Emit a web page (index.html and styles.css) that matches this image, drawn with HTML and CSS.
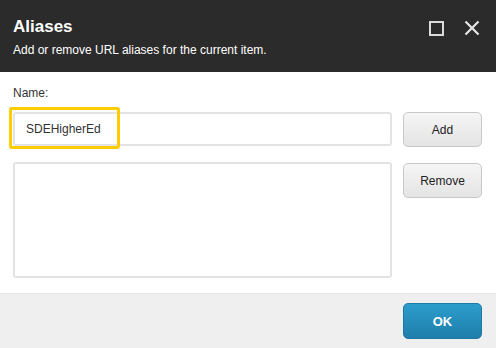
FILE: index.html
```html
<!DOCTYPE html>
<html>
<head>
<meta charset="utf-8">
<link rel="stylesheet" href="styles.css">
</head>
<body>
<div class="dialog">
  <header class="head">
    <div class="head-text">
      <div class="title">Aliases</div>
      <div class="subtitle">Add or remove URL aliases for the current item.</div>
    </div>
    <div class="head-icons">
      <span class="icon-max"></span>
      <svg class="icon-close" width="16" height="16" viewBox="0 0 16 16"><path d="M1.5 1.5 L14.5 14.5 M14.5 1.5 L1.5 14.5" stroke="#e6e6e6" stroke-width="2.2" fill="none"/></svg>
    </div>
  </header>
  <main class="content">
    <div class="label">Name:</div>
    <div class="row">
      <div class="field">
        <input class="input" type="text" value="SDEHigherEd">
        <span class="highlight"></span>
      </div>
      <button class="btn">Add</button>
    </div>
    <div class="row row-list">
      <div class="list"></div>
      <button class="btn">Remove</button>
    </div>
  </main>
  <footer class="foot">
    <button class="btn btn-primary">OK</button>
  </footer>
</div>
</body>
</html>
```
FILE: styles.css
```css
html, body {
  margin: 0;
  padding: 0;
  background: #ffffff;
}
body {
  font-family: "Liberation Sans", Arial, sans-serif;
  width: 496px;
  height: 348px;
  overflow: hidden;
}
.dialog {
  display: flex;
  flex-direction: column;
  height: 348px;
}
.head {
  background: #2b2b2b;
  height: 72px;
  box-sizing: border-box;
  padding: 17px 16px 0 13px;
  display: flex;
  justify-content: space-between;
  align-items: flex-start;
}
.title {
  color: #ffffff;
  font-size: 17px;
  font-weight: bold;
  line-height: 20px;
}
.subtitle {
  color: #ffffff;
  font-size: 12px;
  line-height: 14px;
  margin-top: 6px;
}
.head-icons {
  display: flex;
  align-items: center;
  gap: 20px;
  padding-top: 3px;
}
.icon-max {
  display: block;
  width: 11px;
  height: 11px;
  border: 2px solid #dcdcdc;
}
.icon-close {
  display: block;
}
.content {
  padding: 14px 14px 0 13px;
  flex: 1;
}
.label {
  font-size: 12px;
  line-height: 14px;
  color: #333333;
}
.row {
  display: flex;
  gap: 11px;
  margin-top: 12px;
  align-items: flex-start;
}
.row-list {
  margin-top: 15px;
}
.field {
  position: relative;
  width: 379px;
  height: 34px;
}
.input {
  box-sizing: border-box;
  width: 379px;
  height: 34px;
  margin: 0;
  border: 2px solid #e3e3e3;
  border-radius: 3px;
  padding: 0 0 0 11px;
  font-family: "Liberation Sans", Arial, sans-serif;
  font-size: 12px;
  color: #333333;
  background: #ffffff;
  outline: none;
}
.highlight {
  position: absolute;
  left: -4px;
  top: -5px;
  width: 111px;
  height: 42px;
  box-sizing: border-box;
  border: 3px solid #ffcc00;
  border-radius: 3px;
}
.list {
  box-sizing: border-box;
  width: 379px;
  height: 116px;
  border: 2px solid #e3e3e3;
  border-radius: 3px;
  background: #ffffff;
}
.btn {
  box-sizing: border-box;
  width: 79px;
  height: 35px;
  margin: 0;
  border: 1px solid #c8c8c8;
  border-radius: 5px;
  background: linear-gradient(#f5f5f5, #e4e4e4);
  font-family: "Liberation Sans", Arial, sans-serif;
  font-size: 12px;
  color: #222222;
  padding: 0;
}
.row-list .btn {
  margin-top: 1px;
}
.foot {
  background: #efefef;
  border-top: 1px solid #e6e6e6;
  height: 55px;
  box-sizing: border-box;
  padding: 9px 14px 0 0;
  display: flex;
  justify-content: flex-end;
  align-items: flex-start;
}
.btn-primary {
  height: 36px;
  border: 1px solid #1f7aa3;
  background: linear-gradient(#2c9dcd, #1f7ea9);
  color: #ffffff;
  font-weight: bold;
  font-size: 13px;
}
```
